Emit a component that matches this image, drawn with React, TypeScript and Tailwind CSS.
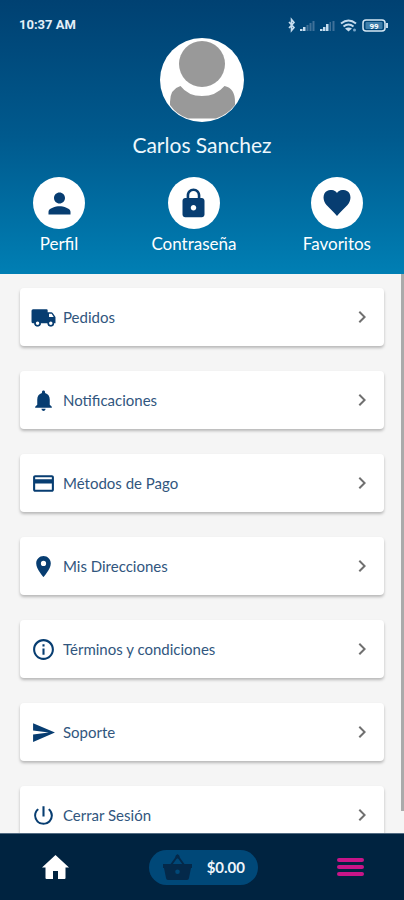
import type { ReactNode } from "react";
import type { IconType } from "react-icons";
import {
  MdChevronRight,
  MdCreditCard,
  MdInfoOutline,
  MdLocationOn,
  MdLock,
  MdNotifications,
  MdPerson,
  MdPowerSettingsNew,
  MdSend,
} from "react-icons/md";

type MenuIcon = IconType | typeof TruckIcon;

function TruckIcon({ size = 24, className }: { size?: number; className?: string }) {
  return (
    <svg width={size} height={size} viewBox="0 0 24 24" fill="currentColor" className={className} aria-hidden="true">
      <path
        fillRule="evenodd"
        d="M2 4H15Q16 4 16 5V7H19.500Q20.300 7 21 8L23.500 11.500V17.500H22A3 3 0 0 1 16 17.500H9.300A3 3 0 0 1 3.300 17.500H2Q0.500 17.500 0.500 16V5.500Q0.500 4 2 4ZM17.300 8.500V11.500H21.800L19.800 8.500ZM6.300 15.900A1.600 1.600 0 1 0 6.300 19.100A1.600 1.600 0 1 0 6.300 15.900ZM19 15.900A1.600 1.600 0 1 0 19 19.100A1.600 1.600 0 1 0 19 15.900Z"
      />
      <circle cx="6.300" cy="17.500" r="2.400" fill="#fff" stroke="currentColor" strokeWidth="1.500" />
      <circle cx="19" cy="17.500" r="2.400" fill="#fff" stroke="currentColor" strokeWidth="1.500" />
    </svg>
  );
}

const menu: { label: string; icon: MenuIcon }[] = [
  { label: "Pedidos", icon: TruckIcon },
  { label: "Notificaciones", icon: MdNotifications },
  { label: "Métodos de Pago", icon: MdCreditCard },
  { label: "Mis Direcciones", icon: MdLocationOn },
  { label: "Términos y condiciones", icon: MdInfoOutline },
  { label: "Soporte", icon: MdSend },
  { label: "Cerrar Sesión", icon: MdPowerSettingsNew },
];

function StatusIcons() {
  return (
    <svg width="104" height="16" viewBox="0 0 104 16" fill="none" aria-hidden="true">
      <path d="M3 5l5 5.500-2.500 3V2.500l2.500 3L3 11" stroke="#c5dcee" strokeWidth="1.600" />
      <path d="M14 14v-2h2.500v2zM17 14v-4h2.500v4z" fill="#c5dcee" />
      <path d="M20.500 14V8h2v6zM23.500 14V6h2v8zM26.500 14V4h2v10z" fill="#3f7199" />
      <path d="M34 14v-2h2.500v2zM37 14v-4h2.500v4zM40 14V7h2.500v7z" fill="#c5dcee" />
      <path d="M43.500 14V5H45v9zM46.500 14V4h2v10z" fill="#3f7199" />
      <path d="M55 6.500q7.500-6 15 0M57.500 9.500q5-4 10 0" stroke="#c5dcee" strokeWidth="2" />
      <path d="M59 11.500q3.500-2 7 0L62.500 14.500z" fill="#c5dcee" />
      <circle cx="68.500" cy="13" r="1.500" fill="#78a5ca" />
      <rect x="77" y="3" width="22" height="11" rx="3" stroke="#d5e7f4" strokeWidth="1.500" />
      <rect x="79.500" y="5" width="17" height="7" rx="1" fill="#3f7fab" />
      <path d="M101 6v5" stroke="#c5dcee" strokeWidth="2" />
      <text x="88" y="11.500" textAnchor="middle" fontSize="8" fontWeight="700" fill="#fff" fontFamily="Roboto, sans-serif">99</text>
    </svg>
  );
}

function Avatar() {
  return (
    <svg width="84" height="84" viewBox="0 0 84 84" role="img" aria-label="Carlos Sanchez">
      <circle cx="42" cy="42" r="42" fill="#fff" />
      <circle cx="42" cy="26" r="23" fill="#999" />
      <path d="M20.500 48Q28 58 42 58T64.500 48Q75 50 75 64V67Q67 77 56 80.500H28Q17 77 10 67V64Q10 51 20.500 48Z" fill="#999" />
    </svg>
  );
}

function Shortcut({ label, children }: { label: string; children: ReactNode }) {
  return (
    <button type="button" className="flex flex-col items-center gap-1 text-[17px] leading-[22px] text-white">
      <span className="flex size-[52px] items-center justify-center rounded-full bg-white text-[#073d71]">{children}</span>
      {label}
    </button>
  );
}

export default function App() {
  return (
    <div className="flex h-screen flex-col overflow-hidden bg-[#f5f5f5] font-[Lato,'Open_Sans',sans-serif]">
      <header className="flex h-[274px] shrink-0 flex-col items-center bg-linear-to-b from-[#004172] via-[#005a8e] to-[#007fb4]">
        <div className="flex h-[38px] w-full items-end justify-between pr-[14px] pb-[5px] pl-[19px]">
          <span className="font-[Roboto,sans-serif] text-[13px] leading-4 font-bold text-[#e3eff8]">10:37 AM</span>
          <StatusIcons />
        </div>
        <Avatar />
        <h1 className="mt-[7px] text-[21px] leading-8 text-[#eef7fc]">Carlos Sanchez</h1>
        <nav className="mt-4 flex w-full justify-between px-[33px]" aria-label="Cuenta">
          <Shortcut label="Perfil">
            <MdPerson size={33} />
          </Shortcut>
          <Shortcut label="Contraseña">
            <MdLock size={33} />
          </Shortcut>
          <Shortcut label="Favoritos">
            <svg width="28" height="26" viewBox="0 0 28 26" fill="currentColor" aria-hidden="true">
              <path d="M14 26C11 22 7 19 3.500 15C-1 10 0 3 4 1C8-1 12 0 14 3C16 0 20-1 24 1C28 3 29 10 24.500 15C21 19 17 22 14 26Z" />
            </svg>
          </Shortcut>
        </nav>
      </header>

      <main className="relative min-h-0 flex-1 overflow-hidden">
        <ul className="flex flex-col gap-[25px] px-5 pt-[14px]">
          {menu.map(({ label, icon: Icon }) => (
            <li key={label}>
              <button
                type="button"
                className="flex h-[58px] w-full items-center rounded-[4px] bg-white pr-[10px] pl-[11px] text-left text-[15px] leading-5 text-[#31567e] shadow-[0_2px_3px_rgba(0,0,0,0.25)]"
              >
                <Icon size={25} className="mr-[7px] shrink-0 text-[#073d71]" />
                <span className="flex-1">{label}</span>
                <MdChevronRight size={24} className="text-[#707070]" />
              </button>
            </li>
          ))}
        </ul>
        <div className="absolute top-0 right-0 bottom-[22px] w-[3px] bg-[#aaaaaa]" />
      </main>

      <footer className="flex h-[67px] shrink-0 items-center justify-between border-t border-[#526b82] bg-[#002340] px-10">
        <button type="button" aria-label="Inicio" className="text-white">
          <svg width="30" height="28" viewBox="0 0 30 28" fill="currentColor" aria-hidden="true">
            <path d="M15.500 2L2 14.500H5.500V25Q5.500 26 6.500 26H13V18H18V26H24.500Q25.500 26 25.500 25V14.500H29Z" />
          </svg>
        </button>
        <button type="button" className="flex h-[35px] w-[109px] items-center justify-between rounded-full bg-[#004878] pr-[13px] pl-[13px] text-[15px] font-bold text-[#eef5fb]">
          <svg width="31" height="28" viewBox="0 0 31 28" aria-hidden="true">
            <path d="M9 12L15.500 3L22 12" fill="none" stroke="#04294a" strokeWidth="2" />
            <circle cx="15.500" cy="3.500" r="2" fill="#04294a" />
            <path
              fillRule="evenodd"
              fill="#04294a"
              d="M1 11H30V15H29L27 25Q26.800 27 25 27H6Q4.200 27 4 25L2 15H1ZM15.500 16.500A2.300 2.300 0 1 0 15.500 21.100A2.300 2.300 0 1 0 15.500 16.500Z"
            />
          </svg>
          $0.00
        </button>
        <button type="button" aria-label="Menú" className="flex w-[27px] flex-col gap-[3px]">
          <span className="h-1 rounded-full bg-[#c81588]" />
          <span className="h-1 rounded-full bg-[#c81588]" />
          <span className="h-1 rounded-full bg-[#c81588]" />
        </button>
      </footer>
    </div>
  );
}
